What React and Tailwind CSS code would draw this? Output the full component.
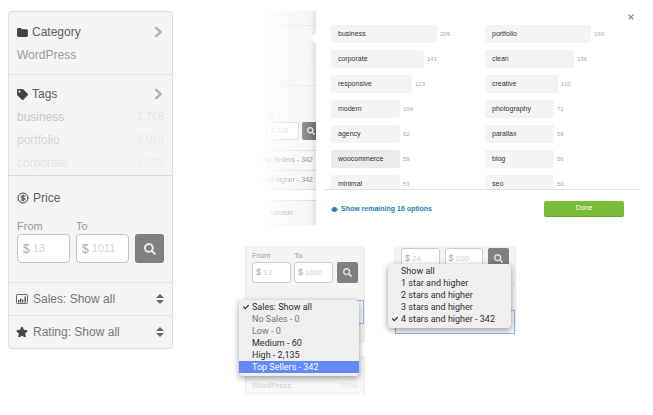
import React from "react";
import { CircleDollarSign } from "lucide-react";
import { FaCheck, FaSearch, FaStar, FaTag } from "react-icons/fa";

const tags = [
  { name: "business", count: "2,768", color: "text-[#c6c6c6]", countColor: "text-[#e2e2e2]" },
  { name: "portfolio", count: "2,019", color: "text-[#d4d4d4]", countColor: "text-[#e6e6e6]" },
  { name: "corporate", count: "1,835", color: "text-[#e3e3e3]", countColor: "text-[#ebebeb]" },
];

const options = [
  { name: "business", count: 209, width: 106 },
  { name: "portfolio", count: 160, width: 106 },
  { name: "corporate", count: 141, width: 93 },
  { name: "clean", count: 136, width: 89 },
  { name: "responsive", count: 123, width: 81 },
  { name: "creative", count: 110, width: 73 },
  { name: "modern", count: 104, width: 69 },
  { name: "photography", count: 71, width: 69 },
  { name: "agency", count: 62, width: 69 },
  { name: "parallax", count: 59, width: 69 },
  { name: "woocommerce", count: 59, width: 69, active: true },
  { name: "blog", count: 56, width: 69 },
  { name: "minimal", count: 53, width: 69 },
  { name: "seo", count: 50, width: 69 },
];

const salesOptions = [
  { label: "Sales: Show all", checked: true },
  { label: "No Sales - 0", muted: true },
  { label: "Low - 0", muted: true },
  { label: "Medium - 60" },
  { label: "High - 2,135" },
  { label: "Top Sellers - 342", active: true },
];

const ratingOptions = [
  { label: "Show all" },
  { label: "1 star and higher" },
  { label: "2 stars and higher" },
  { label: "3 stars and higher" },
  { label: "4 stars and higher - 342", checked: true },
];

const FolderIcon = () => (
  <svg viewBox="0 0 11 9" className="h-[9px] w-[11px]" fill="currentColor">
    <path d="M0 1.300C0 .6.5 0 1.200 0h2.300c.7 0 1.200.6 1.200 1.300h4.800c.8 0 1.400.6 1.400 1.400v4.900c0 .8-.6 1.400-1.400 1.400H1.400C.6 9 0 8.400 0 7.600z" />
  </svg>
);

const ChartIcon = () => (
  <svg viewBox="0 0 12 10" className="h-2.5 w-3">
    <rect x="0.5" y="0.5" width="11" height="9" rx="0.8" fill="none" stroke="currentColor" strokeWidth="0.8" />
    <path d="M2 6h1.300v2.500H2zM4 4.500h1.300v4H4zM6 5.500h1.300v3H6zM8.500 2.500h1.300v6H8.500z" fill="currentColor" />
  </svg>
);

const SortIcon = () => (
  <svg viewBox="0 0 8 10" className="h-2.5 w-2 text-[#666]" fill="currentColor">
    <path d="M4 0l4 4H0zM4 10L0 6h8z" />
  </svg>
);

const ChevronIcon = () => (
  <svg viewBox="0 0 9 12" className="h-3 w-[9px] text-[#b0b0b0]" fill="none" stroke="currentColor" strokeWidth="2.3">
    <path d="M1.3 1.2 6.6 6 1.3 10.8" />
  </svg>
);

const EyeIcon = () => (
  <svg viewBox="0 0 14 10" className="h-[5px] w-[7px]" fill="currentColor">
    <path
      fillRule="evenodd"
      d="M7 0C3.8 0 1.3 2 0 5c1.300 3 3.800 5 7 5s5.700-2 7-5c-1.300-3-3.800-5-7-5zM1.800 5C2.400 3.800 3.200 2.900 4.200 2.200a3.700 3.700 0 0 0 0 5.600C3.200 7.100 2.400 6.200 1.800 5zM9.800 2.200c1 .7 1.800 1.600 2.400 2.800-.6 1.200-1.400 2.100-2.400 2.800a3.700 3.700 0 0 0 0-5.600z"
    />
  </svg>
);

const CloseIcon = () => (
  <svg viewBox="0 0 6 6" className="size-1.5" fill="none" stroke="currentColor" strokeWidth="1.2">
    <path d="M.6.6l4.800 4.800M5.400.6.6 5.400" />
  </svg>
);

const Heading = ({ icon, title }) => (
  <button className="flex w-full items-center pr-px text-left text-[#606060]">
    <span className="w-[15px] text-[#444]">{icon}</span>
    <span className="flex-1">{title}</span>
    <ChevronIcon />
  </button>
);

const SelectRow = ({ id, icon, label }) => (
  <div className="flex h-[33px] items-center border-t border-[#e2e2e2] pl-[7px] pr-2">
    <label htmlFor={id} aria-label={label} className="flex w-[17px] text-[#444]">
      {icon}
    </label>
    <select id={id} className="min-w-0 flex-1 appearance-none bg-transparent text-[#777]">
      <option>{label}</option>
    </select>
    <SortIcon />
  </div>
);

const PriceField = ({ id, label, value }) => (
  <div className="min-w-0 flex-1">
    <label htmlFor={id} className="block text-[11px] leading-4 text-[#999]">
      {label}
    </label>
    <div className="flex h-[29px] items-center rounded border border-[#c4c4c4] bg-white pl-[5px]">
      <span className="text-xs text-[#aaa]">$</span>
      <input id={id} defaultValue={value} className="w-full min-w-0 pl-[3px] text-[11px] text-[#d6d6d6]" />
    </div>
  </div>
);

const SmallPriceField = ({ id, label, value, hideLabel }) => (
  <div className="min-w-0 flex-1">
    {!hideLabel && (
      <label htmlFor={id} className="block text-[8px] leading-3 text-[#999]">
        {label}
      </label>
    )}
    <div className="flex h-[21px] items-center rounded-[3px] border border-[#ccc] bg-white pl-[3px]">
      <span className="text-[9px] text-[#aaa]">$</span>
      <input
        id={id}
        aria-label={label}
        defaultValue={value}
        className="w-full min-w-0 pl-[2px] text-[8px] text-[#cfcfcf]"
      />
    </div>
  </div>
);

const SmallSearch = () => (
  <button
    aria-label="Search"
    className="flex size-[21px] shrink-0 items-center justify-center rounded-[2px] bg-[#808080] text-[#e6e6e6]"
  >
    <FaSearch className="size-[9px]" />
  </button>
);

const Menu = ({ items, className }) => (
  <ul
    role="listbox"
    className={`absolute z-10 rounded-[4px] bg-[#efefef] font-[Roboto,sans-serif] text-[9px] leading-3 shadow-[0_2px_6px_rgba(0,0,0,0.4)] ${className}`}
  >
    {items.map((item) => (
      <li
        key={item.label}
        role="option"
        aria-selected={!!item.checked}
        className={`flex items-center whitespace-nowrap ${
          item.active ? "bg-[#6389fb] text-white" : item.muted ? "text-[#777]" : "text-[#2e2e2e]"
        }`}
      >
        <span className="flex w-[13px] justify-end pr-[3px]">
          {item.checked && <FaCheck className="size-1.5" />}
        </span>
        {item.label}
      </li>
    ))}
  </ul>
);

const Sidebar = () => (
  <aside className="w-[165px] shrink-0 rounded border border-[#dedede] bg-[#f4f4f4] text-xs">
    <section className="h-[62px] px-2 pt-3">
      <Heading icon={<FolderIcon />} title="Category" />
      <a href="#wordpress" className="mt-[7px] block text-[#9c9c9c]">
        WordPress
      </a>
    </section>
    <section className="h-[101px] border-t border-[#e2e2e2] px-2 pt-[11px]">
      <Heading icon={<FaTag className="size-[11px]" />} title="Tags" />
      <ul className="mt-[3px]">
        {tags.map((tag) => (
          <li key={tag.name} className="flex h-[23px] items-center justify-between">
            <a href="#tag" className={tag.color}>
              {tag.name}
            </a>
            <span className={`text-[11px] ${tag.countColor}`}>{tag.count}</span>
          </li>
        ))}
      </ul>
    </section>
    <section className="h-[107px] border-t border-[#d8d8d8] px-2 pt-3.5">
      <h2 className="flex items-center text-[#606060]">
        <span className="w-4 text-[#444]">
          <CircleDollarSign className="size-3" />
        </span>
        Price
      </h2>
      <form className="mt-3 flex items-end gap-1.5">
        <PriceField id="from" label="From" value="13" />
        <PriceField id="to" label="To" value="1011" />
        <button
          type="button"
          aria-label="Search"
          className="flex size-[29px] shrink-0 items-center justify-center rounded-[3px] bg-[#808080] text-[#e6e6e6]"
        >
          <FaSearch className="size-3" />
        </button>
      </form>
    </section>
    <SelectRow id="sales" icon={<ChartIcon />} label="Sales: Show all" />
    <SelectRow id="rating" icon={<FaStar className="size-3" />} label="Rating: Show all" />
  </aside>
);

// the page behind the popover, faded out towards the left
const Backdrop = () => (
  <div className="flex w-14 shrink-0 flex-col items-end overflow-hidden bg-[#f4f4f4] text-[7px] text-[#777] [mask-image:linear-gradient(to_right,transparent,black)]">
    <div className="h-[15px] w-full border-b border-[#e6e6e6]" />
    <div className="h-[60px] w-full border-b border-[#e6e6e6] pt-[19px] text-right leading-3 text-[#e8e8e8]">
      <p>20</p>
      <p>15</p>
    </div>
    <div className="h-[64px] w-full pt-[25px] pl-[7px]">
      <p className="leading-[11px] text-[#aaa]">To</p>
      <div className="flex w-[60px] gap-[3px]">
        <div className="flex h-[18px] w-8 items-center rounded-[3px] border border-[#ccc] bg-white pl-[3px] text-[#bbb]">
          $ 200
        </div>
        <div className="flex size-[18px] items-center rounded-[2px] bg-[#707070] pl-[5px] text-[#eee]">
          <FaSearch className="size-2" />
        </div>
      </div>
    </div>
    <p className="flex h-5 items-center border-t border-[#ddd] pr-[3px] whitespace-nowrap">Top Sellers - 342</p>
    <p className="flex h-5 items-center border-y border-[#ddd] pr-[3px] whitespace-nowrap">and higher - 342</p>
    <div className="h-[10px] w-full shrink-0 bg-white" />
    <p className="flex h-[26px] w-full items-center justify-end border-t border-[#ddd] pr-[23px] whitespace-nowrap">
      version
    </p>
  </div>
);

const TagPopover = () => (
  <div className="flex h-[215px] overflow-hidden pl-[15px]">
    <Backdrop />
    <div className="relative min-w-0 flex-1 bg-white">
      <div className="absolute inset-y-0 left-0 w-px bg-white shadow-[-1px_0_4px_rgba(0,0,0,0.35)]" />
      <div className="absolute top-[23px] -left-1 size-2 rotate-45 bg-white" />
      <div className="absolute inset-y-0 left-0 w-2 bg-white" />
      <button aria-label="Close" className="absolute top-[3px] right-[5px] text-[#888]">
        <CloseIcon />
      </button>
      <ul className="grid h-[178px] grid-cols-2 content-start gap-y-[7px] overflow-hidden pt-3.5 pl-[15px]">
        {options.map((option) => (
          <li key={option.name} className="flex h-[18px] gap-[3px] text-[7px]">
            <a
              href="#option"
              className={`flex items-center rounded-[2px] pl-[7px] text-[#333] ${
                option.active ? "bg-[#ebebeb]" : "bg-[#f4f4f4]"
              }`}
              style={{ width: option.width }}
            >
              {option.name}
            </a>
            <span className="self-center text-[6px] text-[#aaa]">{option.count}</span>
          </li>
        ))}
      </ul>
      <footer className="flex items-start justify-between border-t border-[#e0e0e0] pt-[11px] pr-[15px] pl-[15px] text-[7px]">
        <a href="#more" className="flex h-4 items-center gap-[3px] font-bold text-[#1a7fb0]">
          <EyeIcon />
          Show remaining 16 options
        </a>
        <button className="h-4 w-20 rounded-[2px] border-b border-[#6b9f30] bg-[#79bd37] text-white">Done</button>
      </footer>
    </div>
  </div>
);

const SalesPanel = () => (
  <div className="relative w-[120px]">
    <div className="h-[97px] rounded-b-[3px] border border-t-0 border-[#ececec] bg-[#f4f4f4]">
      <div className="flex h-[51px] items-start gap-[3px] px-1.5 pt-1">
        <SmallPriceField id="sales-from" label="From" value="13" />
        <SmallPriceField id="sales-to" label="To" value="1000" />
        <div className="pt-3 pl-px">
          <SmallSearch />
        </div>
      </div>
      <select
        aria-label="Sales"
        className="h-6 w-full appearance-none border border-[#8fb4f7] bg-[#f7f7f7] pl-1 text-[8px] text-[#777]"
      />
    </div>
    <div className="mt-[13px] flex h-[39px] items-end justify-between rounded-t-[3px] border border-b-0 border-[#ededed] bg-[#f7f7f7] px-1.5 pb-[3px] text-[8px] text-[#d0d0d0]">
      <a href="#wordpress">WordPress</a>
      <span className="text-[#e6e6e6]">2534</span>
    </div>
    <Menu items={salesOptions} className="top-[54px] -left-1.5 w-[120px] pt-px pb-[3px]" />
  </div>
);

const RatingPanel = () => (
  <div className="relative h-[85px] w-[122px] border-x border-[#ececec] bg-[#f4f4f4]">
    <div className="flex h-[37px] items-start gap-[5px] px-1.5 pt-0.5">
      <SmallPriceField id="rating-from" label="From" value="24" hideLabel />
      <SmallPriceField id="rating-to" label="To" value="200" hideLabel />
      <SmallSearch />
    </div>
    <div className="h-6 border-t border-[#e2e2e2]" />
    <select
      aria-label="Rating"
      className="h-6 w-full appearance-none border border-[#8fb4f7] bg-[#f7f7f7] pl-1 text-[8px] text-[#777]"
    />
    <Menu items={ratingOptions} className="top-[18px] -left-[7px] w-[123px] pt-px pb-[3px]" />
  </div>
);

const App = () => {
  return (
    <main className="flex min-h-screen items-start bg-white pt-[11px] pr-3.5 pl-2 font-['Liberation_Sans',sans-serif]">
      <Sidebar />
      <div className="ml-[72px] min-w-0 flex-1">
        <TagPopover />
        <div className="mt-5 flex items-start gap-[29px]">
          <SalesPanel />
          <RatingPanel />
        </div>
      </div>
    </main>
  );
};

export default App;
